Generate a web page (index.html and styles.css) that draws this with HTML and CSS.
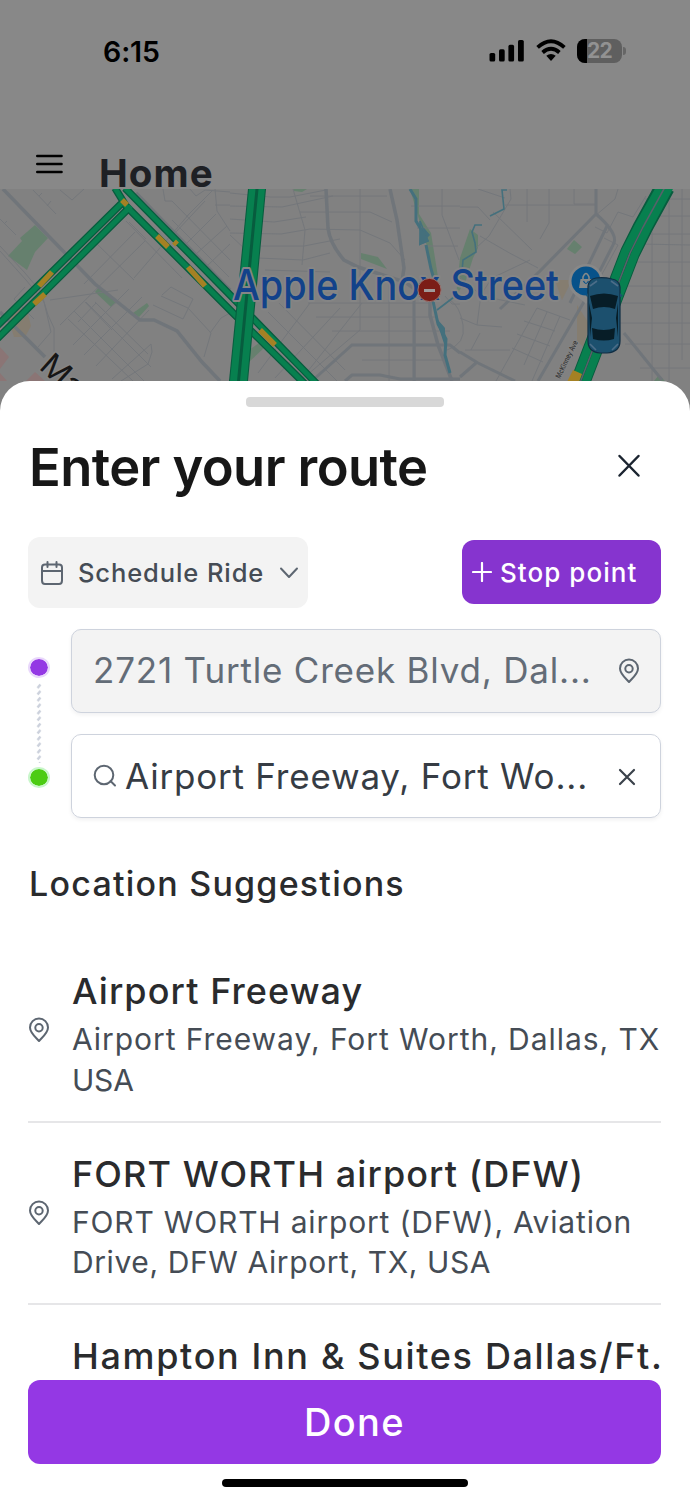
FILE: index.html
```html
<!DOCTYPE html>
<html lang="en">
<head>
<meta charset="utf-8">
<title>Enter your route</title>
<link rel="stylesheet" href="styles.css">
</head>
<body>
<div class="screen">
  <div class="top">
    <div class="status">
      <span class="clock">6:15</span>
      <div class="indicators">
        <svg class="signal" width="36" height="24" viewBox="0 0 36 24"><rect x="0.5" y="14" width="5.7" height="8.6" rx="1.6"/><rect x="10" y="10.3" width="5.7" height="12.3" rx="1.6"/><rect x="19.4" y="5.8" width="5.7" height="16.8" rx="1.6"/><rect x="29" y="1" width="5.8" height="21.6" rx="1.6"/></svg>
        <svg class="wifi" width="30" height="24" viewBox="0 0 30 24"><path class="wifi-arc" d="M1.6 8.3Q15-4 28.4 8.3M6.6 13.5Q15 6.2 23.4 13.5"/><path d="M10.3 16.8Q15 13.2 19.7 16.8L15 22Z"/></svg>
        <div class="battery"><span class="level"></span><span class="pct">22</span></div><span class="nub"></span>
      </div>
    </div>
    <div class="nav">
      <svg width="28" height="22" viewBox="0 0 28 22"><path d="M1.3 3H25.5M1.3 11H25.5M1.3 19H25.5" stroke="#000" stroke-width="2.6" stroke-linecap="round"/></svg>
      <span class="nav-title">Home</span>
    </div>
  </div>

  <svg class="map" width="690" height="225" viewBox="0 189 690 225">
    <rect y="189" width="690" height="225" fill="#818181"/>
    <g class="park">
      <path d="M35 225L48 238L35 252L27 270L8 256L22 241L20 238Z"/>
      <path d="M99 287L116 303L111 307L95 292ZM133 313L147 303L149 306L139 317Z"/>
      <path d="M293 189H307L302 192L294 191ZM361 253L378 257L387 269L361 259Z"/>
      <path d="M410 189H419V214L431 233L438 277L433 280L428 250Z"/>
      <path d="M470 229L478 235L478 248L473 258L466 280L456 296L460 258Z"/>
      <path d="M567 249L574 240L582 247L575 254ZM249 350L262 341L264 348L249 362ZM654 381L659 375L665 381Z"/>
    </g>
    <path d="M8 318L18 308L27 310L31 326L25 337L14 337ZM555 280H572L562 300ZM577 305L590 325L583 347L577 340Z" fill="#857d70"/>
    <path d="M0 347L9 357L0 369ZM26 381L35 372L45 381ZM0 373L7 381H0Z" fill="#8b7575"/>
    <g class="street">
      <path d="M33 190L56 214M39 196L42 193M47 206L51 201M0 219L16 235M4 224L7 221M60 190L72 200L84 189M163 189L165 201H172L230 260M215 189L217 211L230 231M215 205H230M190 189L196 196L205 190L230 192"/>
      <path d="M126 221L182 278M135 232L84 284M145 241L60 325M97 244L134 280M190 213L134 278M118 290L50 300M85 302L112 330M74 311L150 387M68 319L133 381M86 302L151 367M95 302L148 354M78 322L96 303M73 345L129 289M84 355L142 297M96 366L149 310M112 379L151 344L152 352L148 364L121 381M129 222L146 239"/>
      <path d="M163 230L220 286M172 220L229 277M186 217L213 190M175 233L205 201M186 244L216 214M196 254L227 226M207 266L230 244M171 287L193 299L183 319L153 305M161 296L188 308M171 287L162 295M210 333L221 318L230 313M188 308L211 333L204 357M0 246L25 273L41 292L48 315L54 328L54 352M0 251L26 280L44 302L51 332L38 347M25 287L14 299L34 319"/>
      <path d="M230 193L270 197L290 197L326 190M230 206L282 207L333 196M230 219L274 222L306 217M230 233L281 234L310 229L360 230L390 243L405 260M261 246L304 246L340 239M258 258L303 260L330 253M293 189L305 230L302 265M265 270L330 272M300 212H370L392 222M310 196H387M360 189V330L300 381M389 280V381M415 320V381"/>
      <path d="M308 303H430M316 317H435M332 331H450M362 360H443M279 303L345 370M268 312L337 381M255 323L310 378M254 333L309 381M258 373L310 303M275 378L340 308M300 381L362 303M230 235L246 250M411 206H460M417 228H460M426 246H458M442 189V215L459 260M445 296L452 304H460"/>
      <path d="M460 207H478L490 220M527 189V222M549 189V223L540 239M574 189V204H595M510 189L511 199L489 236L475 249M480 236Q510 254 538 268M493 212L532 250M505 205H595M478 189L505 198M618 189L615 199L595 216M618 212L607 233L595 227M618 212L633 217L646 196M604 238L618 245L595 287M639 244L690 245M645 199H690M640 216H690M635 234H690M629 262H690M623 286H690M620 303H690M617 323H690M625 344H690M640 368H690M652 189V381M669 189V381M682 189V360"/>
      <path d="M460 277L482 296L525 305M480 296L492 278L530 260M460 318L477 325L502 327M477 325L481 294M537 308L496 381M537 308L570 320M524 321L555 331M517 334L550 346M512 348L543 362M547 312L524 365M560 316L532 381M471 350L480 333M450 300Q460 306 463 325T447 350M465 350L510 350"/>
    </g>
    <g class="avenue">
      <path d="M3 189L95 284L140 320H154L177 331L202 362L220 381M0 312L45 357M136 193L230 290" stroke-width="3.500"/>
      <path d="M326 189L328 228Q330 244 344 260L358 267L405 282L430 300V315L438 345L452 381" stroke-width="3.500"/>
      <path d="M390 189L397 220L404 268L402 281" stroke-width="3.500"/>
      <path d="M312 381L352 345H450L460 353M414 294V381M345 381L352 375H380L400 379H460M460 352L478 363L515 381M460 377L476 363" stroke-width="3"/>
      <path d="M596 189V214L540 271L500 309M596 214Q620 235 613 245L585 300L538 381M608 224L570 303M624 333L662 380" stroke-width="3"/>
    </g>
    <g fill="none" stroke="#44707d">
      <path d="M410 189L416 199V221L422 231L421 242L428 235L423 229M426 245L431 269L436 286M433 301L438 324L446 339L445 355L450 373" stroke-width="3"/>
      <path d="M437 310L454 297M507 190L502 190L504 209L490 216M482 225H475L472 232L475 243L476 252L463 260L462 272M420 221L428 241L420 244ZM437 320L444 328L445 344Z" stroke-width="1.600"/>
    </g>
    <path d="M420 226L429 241L420 245ZM437 320L445 329L445 345Z" fill="#44707d"/>
    <g class="road-edge"><path d="M-5 328L124 201M-5 341L131 206M115 188L126 206L235 315L310 389M125 188L235 300L318 385" stroke-width="7.500"/></g>
    <g class="road"><path d="M-5 328L124 201M-5 341L131 206M115 188L126 206L235 315L310 389M125 188L235 300L318 385" stroke-width="5"/></g>
    <path class="slow" d="M39 286L52 272M34 304L45 294M122 200L127 205M157 236L168 247M188 267L205 286M174 241.500L177 244.500M260 330L275 345"/>
    <path d="M248 189H266L248 381H229Z" fill="#075c3e"/>
    <path d="M249 189H255.500L237 381H230ZM258.500 189H265L247 381H240Z" fill="#07804f"/>
    <path d="M665 187L643 227L630 253L578 388" fill="none" stroke="#075c3e" stroke-width="20" stroke-linejoin="round"/>
    <path d="M660.500 187L638.500 226L625 252L573 387M669.500 187L647.500 228L635 254L583 389" fill="none" stroke="#07804f" stroke-width="8"/>
    <path d="M665 187L643 227L630 253L578 388" fill="none" stroke="#56626a" stroke-width="1.600"/>
    <path d="M573 370L582 374L579 382H567Z" fill="#a58124"/>
    <g class="label">
      <text x="233" y="299.5" font-size="42" textLength="326" lengthAdjust="spacingAndGlyphs" class="place">Apple Knox Street</text>
      <text transform="translate(38 368) rotate(42)" font-size="32" class="major">Ma</text>
      <text transform="translate(560 379) rotate(-64)" font-size="7.500" textLength="41" lengthAdjust="spacingAndGlyphs" class="minor">McKinney Ave</text>
    </g>
    <circle cx="429.5" cy="290" r="11.600" fill="#7b1d17" stroke="#977572"/><path d="M424 290.5H435" stroke="#a09a9a" stroke-width="3"/>
    <path d="M586 264a17.5 17.5 0 0 1 17.5 17.5C603.500 294 592 297 586 304C580 297 568.500 294 568.500 281.500A17.500 17.500 0 0 1 586 264Z" fill="#888"/>
    <circle cx="586" cy="281" r="14.500" fill="#07528a"/>
    <path d="M580.500 279H591.500L593 288H579Z" fill="#858989"/>
    <path d="M583 280V277Q586 270 589 277V280" fill="none" stroke="#858989" stroke-width="1.600"/>
    <path d="M583.500 281Q586 286 588.500 281" fill="none" stroke="#07528a" stroke-width="1.200"/>
    <path d="M588 286Q589 279 596 278Q604 277 612 279Q619 280 620 287V341Q620 352 607 353H600Q588 352 588 341Z" fill="#1c506e" stroke="#102d43" stroke-width="1.200"/>
    <path d="M620 293L623 296L620 297ZM588 293L586 296L588 297Z" fill="#1c506e"/>
    <path d="M590 296Q604 291 618 296L615 309Q604 305 593 309ZM592 328Q604 332 615 328L614 339Q604 342 593 339ZM589 303L592 318L590 337ZM618 303L616 318L618 337Z" fill="#071d27"/>
    <path d="M590 286L597 281M618 286L611 281M590 344L596 350M618 344L612 350" stroke="#4c6d88" stroke-width="1.600"/>
  </svg>

  <main class="sheet">
    <div class="grip"></div>
    <header class="sheet-head">
      <h1>Enter your route</h1>
      <svg class="close" width="24" height="24" viewBox="0 0 24 24"><path d="M2.500 2L21.500 21.500M21.500 2L2.500 21.500" stroke="#1b2430" stroke-width="2.500" stroke-linecap="round"/></svg>
    </header>
    <div class="actions">
      <button class="schedule">
        <svg width="24" height="26" viewBox="0 0 24 26"><path d="M5 4.500H19Q22 4.500 22 7.500V20.500Q22 24 19 24H5Q2 24 2 20.500V7.500Q2 4.500 5 4.500ZM2 11H22M7.500 2V7M16.500 2V7" class="line"/></svg>
        <span>Schedule Ride</span>
        <svg width="20" height="14" viewBox="0 0 20 14"><path d="M2 2.500L10 11L18 2.500" class="line"/></svg>
      </button>
      <button class="stop">
        <svg width="20" height="20" viewBox="0 0 20 20"><path d="M10 1V19M1 10H19" stroke="#fff" stroke-width="2.200" stroke-linecap="round"/></svg>
        <span>Stop point</span>
      </button>
    </div>
    <section class="route">
      <div class="rail">
        <span class="dot origin"></span>
        <svg class="dashes" width="6" height="80" viewBox="0 0 6 80"><defs><pattern id="hatch" width="6" height="6.500" patternUnits="userSpaceOnUse"><path d="M1.500 5L4.500 1.500" stroke="#ccd1dc" stroke-width="2.400"/></pattern></defs><rect width="6" height="80" fill="url(#hatch)"/></svg>
        <span class="dot target"></span>
      </div>
      <div class="fields">
        <div class="field filled"><span class="from">2721 Turtle Creek Blvd, Dal...</span>
          <svg class="pin" width="22" height="26" viewBox="0 0 22 26"><path d="M11 24C8 20.500 2 16 2 10.500A9 9 0 0 1 20 10.500C20 16 14 20.500 11 24Z" class="line"/><circle cx="11" cy="10.800" r="3.700" class="line"/></svg></div>
        <div class="field"><svg class="search" width="24" height="24" viewBox="0 0 24 24"><circle cx="11" cy="11" r="9.300" class="line"/><path d="M17.500 17L22 21.500" class="line"/></svg><span class="to">Airport Freeway, Fort Wo...</span>
          <svg class="clear" width="18" height="18" viewBox="0 0 18 18"><path d="M2 2L16 16M16 2L2 16" stroke="#3b424b" stroke-width="2.200" stroke-linecap="round"/></svg></div>
      </div>
    </section>
    <h2>Location Suggestions</h2>
    <ul class="places">
      <li><svg class="pin" width="22" height="26" viewBox="0 0 22 26"><path d="M11 24C8 20.500 2 16 2 10.500A9 9 0 0 1 20 10.500C20 16 14 20.500 11 24Z" class="line"/><circle cx="11" cy="10.800" r="3.700" class="line"/></svg>
        <div><h3 class="n1">Airport Freeway</h3><p class="a1">Airport Freeway, Fort Worth, Dallas, TX</p><p class="a2">USA</p></div></li>
      <li><svg class="pin" width="22" height="26" viewBox="0 0 22 26"><path d="M11 24C8 20.500 2 16 2 10.500A9 9 0 0 1 20 10.500C20 16 14 20.500 11 24Z" class="line"/><circle cx="11" cy="10.800" r="3.700" class="line"/></svg>
        <div><h3 class="n2">FORT WORTH airport (DFW)</h3><p class="a3">FORT WORTH airport (DFW), Aviation</p><p class="a4">Drive, DFW Airport, TX, USA</p></div></li>
      <li><span class="pin"></span><div><h3 class="n3">Hampton Inn &amp; Suites Dallas/Ft.</h3></div></li>
    </ul>
    <button class="done">Done</button>
    <div class="home-bar"></div>
  </main>
</div>
</body>
</html>
```
FILE: styles.css
```css
* { box-sizing: border-box; margin: 0; padding: 0; }
body { font-family: Inter, "Liberation Sans", sans-serif; background: #fff; }
button { border: 0; font-family: inherit; }
.screen { width: 690px; height: 1500px; overflow: hidden; display: flex; flex-direction: column; }
.top { height: 189px; flex: none; background: #888; }
.status { height: 102px; padding: 0 64px 0 103px; display: flex; justify-content: space-between; align-items: center; }
.clock { font-size: 28.500px; font-weight: 600; line-height: 40px; padding-top: 2px; letter-spacing: -.1px; }
.indicators { display: flex; align-items: center; }
.signal { margin-right: 11px; }
.wifi { margin-right: 10px; }
.wifi-arc { fill: none; stroke: #000; stroke-width: 3.800; }
.battery { width: 45px; height: 24px; border-radius: 8px; background: #5f5f5f; overflow: hidden; display: flex; align-items: center; margin-left: 1px; }
.level { width: 10px; height: 24px; background: #000; flex: none; }
.pct { color: #929292; font-size: 21px; font-weight: 700; line-height: 24px; letter-spacing: -.7px; }
.nub { width: 3px; height: 8px; margin-left: 1px; background: #666; border-radius: 0 3px 3px 0; }
.nav { display: flex; padding-left: 36px; gap: 35px; align-items: flex-start; }
.nav svg { margin-top: 51px; }
.nav-title { font-size: 38.500px; font-weight: 650; line-height: 34px; margin-top: 54px; color: #1e2024; letter-spacing: 1.100px; }
.map { display: block; flex: none; font-family: Inter, "Liberation Sans", sans-serif; }
.park { fill: #66806e; }
.street { fill: none; stroke: #74777b; stroke-width: 1; }
.avenue { fill: none; stroke: #70757a; }
.road, .road-edge { fill: none; stroke: #07804f; stroke-linejoin: round; }
.road-edge { stroke: #075c3e; }
.slow { fill: none; stroke: #a58124; stroke-width: 5.500; }
.label { paint-order: stroke; stroke: #858585; stroke-linejoin: round; }
.place { fill: #12428a; stroke-width: 4px; font-weight: 450; }
.major { fill: #161616; stroke-width: 3px; }
.minor { fill: #303030; stroke-width: 2px; font-weight: 500; }
.sheet { position: relative; margin-top: -33px; width: 690px; height: 1119px; background: #fff; border-radius: 30px 30px 0 0; padding: 16px 29px 0 28px; display: flex; flex-direction: column; flex: none; }
.grip { width: 198px; height: 10px; border-radius: 4px; background: #d8d8d8; align-self: center; flex: none; }
.sheet-head { height: 130px; flex: none; display: flex; justify-content: space-between; align-items: flex-start; padding-right: 20px; }
h1 { font-size: 52.500px; font-weight: 560; line-height: 64px; margin: 28px 0 0 1px; letter-spacing: -.600px; color: #171717; white-space: nowrap; }
.close { margin-top: 47px; }
.actions { height: 71px; flex: none; display: flex; justify-content: space-between; align-items: center; }
.schedule { width: 280px; height: 71px; border-radius: 12px; background: #f3f3f3; color: #454c55; display: flex; align-items: center; padding: 0 9px 0 12px; font-size: 25.500px; font-weight: 500; letter-spacing: .9px; white-space: nowrap; }
.schedule span { margin-left: 14px; width: 201px; text-align: left; }
.line { fill: none; stroke: #5d6671; stroke-width: 2; stroke-linecap: round; stroke-linejoin: round; }
.stop { width: 199px; height: 64px; margin-bottom: 1px; border-radius: 12px; background: #8634cf; color: #fff; display: flex; align-items: center; gap: 8px; padding-left: 10px; font-size: 26px; font-weight: 500; letter-spacing: 1.050px; white-space: nowrap; }
.route { margin-top: 21px; display: flex; flex: none; }
.rail { width: 43px; display: flex; flex-direction: column; align-items: flex-start; padding-top: 28px; }
.dot { width: 22px; height: 21px; border-radius: 50%; border: 2.500px solid #e9d8fb; background: #9438e4; background-clip: padding-box; }
.target { background-color: #4ccc12; border-color: #c9f6cb; }
.dashes { margin: 5px 0 4px 8px; }
.fields { flex: 1; display: flex; flex-direction: column; gap: 21px; }
.field { height: 84px; border: 1.500px solid #ced3dd; border-radius: 10px; box-shadow: 0 2px 4px rgba(16, 24, 40, .06); display: flex; align-items: center; padding: 0 20px 0 21px; font-size: 35px; color: #363c44; white-space: nowrap; }
.filled { background: #f3f3f3; color: #636c77; }
.field .pin { margin-left: auto; }
.search { margin-right: 8px; }
.clear { margin-left: auto; margin-right: 4px; margin-top: 1px; }
.from { letter-spacing: .800px; margin-bottom: 2px; }
.to { letter-spacing: .800px; }
h2 { margin: 43px 0 0 1px; height: 45px; line-height: 45px; font-size: 34px; font-weight: 500; color: #2a2b2d; letter-spacing: 1.220px; flex: none; white-space: nowrap; }
.places { list-style: none; height: 474px; overflow: hidden; flex: none; padding-top: 34px; margin-right: -29px; }
.places li { display: flex; height: 182.700px; margin-right: 29px; border-bottom: 2px solid #e6e6e8; }
.places li:last-child { border: 0; }
.places .pin { width: 22px; flex: none; margin: 77px 22px 0 0; }
h3 { margin-top: 26px; height: 53px; line-height: 50px; font-size: 36px; font-weight: 500; color: #2a2b2d; letter-spacing: 1.080px; white-space: nowrap; }
.places p { font-size: 30px; line-height: 40.500px; color: #454c55; white-space: nowrap; }
.n3 { letter-spacing: 1.650px; }
.a1 { letter-spacing: .940px; }
.a2 { letter-spacing: -.200px; }
.a3 { letter-spacing: .820px; }
.a4 { letter-spacing: .600px; }
.done { height: 84px; flex: none; border-radius: 12px; background: #9438e4; color: #fff; font-size: 38px; font-weight: 500; letter-spacing: 1.400px; padding-left: 20px; }
.home-bar { width: 246px; height: 8px; border-radius: 4px; background: #000; align-self: center; margin-top: 15px; flex: none; }
```
